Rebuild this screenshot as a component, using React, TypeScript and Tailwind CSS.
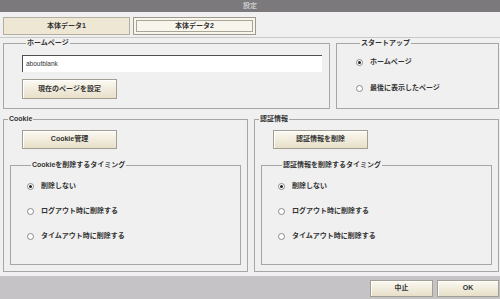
const font = "font-['Liberation_Sans','Noto_Sans_CJK_JP',sans-serif]"
const btn =
  'flex items-center justify-center border border-[#a29e92] bg-gradient-to-b from-[#fbf9f2] to-[#e7dfc8] shadow-[inset_1px_1px_0_#fff] text-[#333] font-bold'

function Radio({ label, checked }: { label: string; checked?: boolean }) {
  return (
    <div className="flex items-center h-[10px] gap-[7px]">
      <span className="w-[7px] h-[7px] rounded-full border border-[#8a8a8a] bg-white flex items-center justify-center">
        {checked && <span className="w-[3px] h-[3px] rounded-full bg-[#222]" />}
      </span>
      <span className="text-[#333] font-bold">{label}</span>
    </div>
  )
}

function Group({ title, className, children }: { title: string; className: string; children: React.ReactNode }) {
  return (
    <fieldset className={`border border-[#a6a6a6] ${className}`}>
      <legend className="ml-[4px] px-[1px] leading-[10px] text-[#333] font-bold">{title}</legend>
      {children}
    </fieldset>
  )
}

function Timing({ title }: { title: string }) {
  return (
    <Group title={title} className="mx-[6px] mt-[11px] h-[105px] pl-[16px] pt-[11px] flex flex-col gap-[15px]">
      <Radio label="削除しない" checked />
      <Radio label="ログアウト時に削除する" />
      <Radio label="タイムアウト時に削除する" />
    </Group>
  )
}

export default function App() {
  return (
    <div className={`w-[500px] h-[299px] flex flex-col bg-[#f0f0f0] text-[7px] ${font}`}>
      <div className="h-[12px] bg-[#7b797b] flex items-center justify-center text-[#e6e6e6]">設定</div>

      <div className="flex gap-[3px] pl-[3px] pt-[5px]">
        <div className="w-[127px] h-[18px] flex items-center justify-center border border-[#b3ae9f] bg-[#eee7d4] text-[#333] font-bold">
          本体データ1
        </div>
        <div className="w-[123px] h-[18px] p-[2px] border border-[#9d998c] bg-[#f8f5ec]">
          <div className="h-full flex items-center justify-center border border-[#a8a498] text-[#333] font-bold">本体データ2</div>
        </div>
      </div>
      <div className="mt-[2px] h-px bg-[#c9c9c9]" />

      <div className="flex gap-[6px] pl-[3px]">
        <Group title="ホームページ" className="w-[327px] h-[71px] pl-[18px] pt-[7px]">
          <div className="w-[300px] h-[17px] bg-white border-t border-l border-[#4e4e4e] flex items-center pl-[3px] text-[6.5px] text-[#333]">
            aboutblank
          </div>
          <button className={`${btn} mt-[7px] w-[95px] h-[20px]`}>現在のページを設定</button>
        </Group>
        <Group title="スタートアップ" className="w-[163px] h-[71px] pl-[19px] pt-[9px] flex flex-col gap-[16px]">
          <Radio label="ホームページ" checked />
          <Radio label="最後に表示したページ" />
        </Group>
      </div>

      <div className="flex gap-[6px] pl-[3px] mt-[5px]">
        <Group title="Cookie" className="w-[245px] h-[158px] pt-[6px]">
          <button className={`${btn} ml-[18px] w-[95px] h-[19px]`}>Cookie管理</button>
          <Timing title="Cookieを削除するタイミング" />
        </Group>
        <Group title="認証情報" className="w-[245px] h-[158px] pt-[6px]">
          <button className={`${btn} ml-[18px] w-[95px] h-[19px]`}>認証情報を削除</button>
          <Timing title="認証情報を削除するタイミング" />
        </Group>
      </div>

      <div className="mt-auto h-[23px] bg-[#c5c3c5] flex justify-end gap-[4px] pr-[1px] pt-[4px]">
        <button className={`${btn} w-[63px] h-[17px]`}>中止</button>
        <button className={`${btn} w-[62px] h-[17px]`}>OK</button>
      </div>
    </div>
  )
}
